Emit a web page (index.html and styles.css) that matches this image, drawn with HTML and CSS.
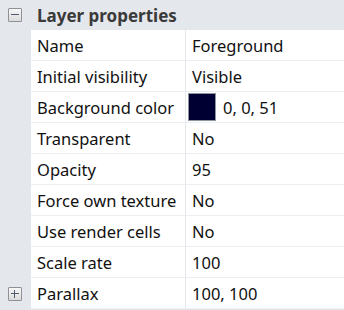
FILE: index.html
```html
<!DOCTYPE html>
<html lang="en">
<head>
    <meta charset="UTF-8">
    <title>Layer properties</title>
    <link rel="stylesheet" href="styles.css">
</head>
<body>
    <div class="group-header">
        <div class="gutter">
            <span class="toggle"><span class="bar"></span></span>
        </div>
        <div class="group-title">Layer properties</div>
    </div>

    <div class="prop-row">
        <div class="gutter"></div>
        <div class="prop-name">Name</div>
        <div class="prop-value">Foreground</div>
    </div>
    <div class="prop-row">
        <div class="gutter"></div>
        <div class="prop-name">Initial visibility</div>
        <div class="prop-value">Visible</div>
    </div>
    <div class="prop-row">
        <div class="gutter"></div>
        <div class="prop-name">Background color</div>
        <div class="prop-value color-value">
            <span class="swatch"></span>
            <span>0, 0, 51</span>
        </div>
    </div>
    <div class="prop-row">
        <div class="gutter"></div>
        <div class="prop-name">Transparent</div>
        <div class="prop-value">No</div>
    </div>
    <div class="prop-row">
        <div class="gutter"></div>
        <div class="prop-name">Opacity</div>
        <div class="prop-value">95</div>
    </div>
    <div class="prop-row">
        <div class="gutter"></div>
        <div class="prop-name">Force own texture</div>
        <div class="prop-value">No</div>
    </div>
    <div class="prop-row">
        <div class="gutter"></div>
        <div class="prop-name">Use render cells</div>
        <div class="prop-value">No</div>
    </div>
    <div class="prop-row">
        <div class="gutter"></div>
        <div class="prop-name">Scale rate</div>
        <div class="prop-value">100</div>
    </div>
    <div class="prop-row">
        <div class="gutter">
            <span class="toggle"><span class="bar"></span><span class="bar vertical"></span></span>
        </div>
        <div class="prop-name">Parallax</div>
        <div class="prop-value">100, 100</div>
    </div>
</body>
</html>
```

FILE: styles.css
```css
body {
    margin: 0;
    background: #e4e7ec;
    font-family: "Noto Sans", "Open Sans", sans-serif;
    font-size: 16.5px;
    color: #111111;
}

.gutter {
    width: 31px;
    display: flex;
    align-items: center;
    justify-content: center;
    padding-right: 2px;
    box-sizing: border-box;
}

.toggle {
    position: relative;
    width: 12px;
    height: 12px;
    border: 1px solid #8e9196;
    border-radius: 1px;
    background: linear-gradient(#f7f7f7, #dcdcdc);
}

.toggle .bar {
    position: absolute;
    left: 2px;
    top: 5px;
    width: 8px;
    height: 1px;
    background: #4f5a6e;
}

.toggle .bar.vertical {
    left: 5px;
    top: 2px;
    width: 1px;
    height: 8px;
}

.group-header {
    display: flex;
    height: 30px;
    align-items: center;
}

.group-title {
    padding-left: 6px;
    font-weight: bold;
    font-size: 17px;
    color: #3a3a3a;
}

.prop-row {
    display: grid;
    grid-template-columns: 31px 155px 1fr;
    height: 31px;
}

.prop-name,
.prop-value {
    display: flex;
    align-items: center;
    padding-left: 6px;
    background: #ffffff;
    border-bottom: 1px solid #eceef2;
    white-space: nowrap;
    overflow: hidden;
}

.prop-name {
    border-right: 1px solid #e4e7ec;
}

.color-value {
    padding-left: 2px;
    gap: 7px;
}

.swatch {
    width: 26px;
    height: 26px;
    background: #000033;
    border: 1px solid #8f949c;
}
```
